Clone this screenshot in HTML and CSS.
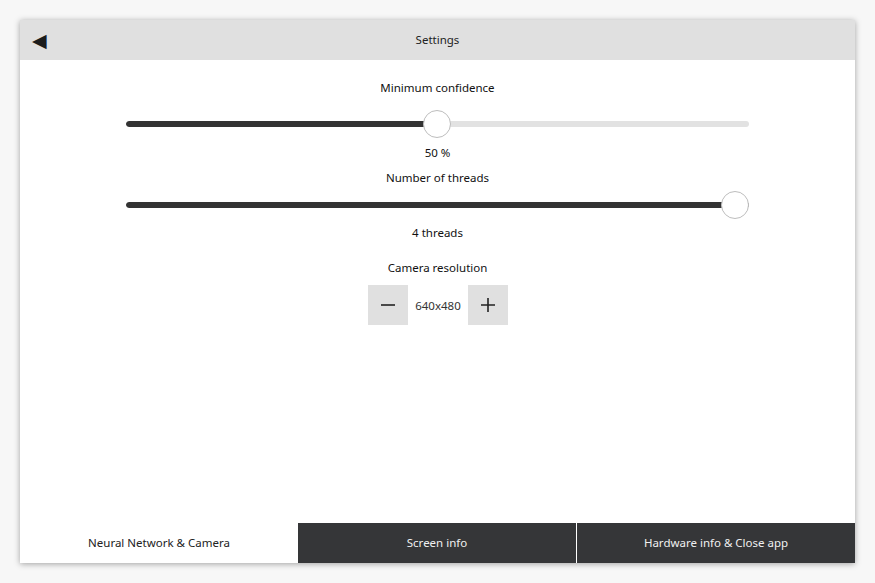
FILE: index.html
```html
<!DOCTYPE html>
<html>
<head>
<meta charset="utf-8">
<link rel="stylesheet" href="styles.css">
</head>
<body>
<div class="window">
  <div class="header">
    <span class="back">&#9664;</span>
    <span class="title">Settings</span>
  </div>
  <div class="content">
    <div class="label l1">Minimum confidence</div>
    <div class="slider s1">
      <div class="track"><div class="fill" style="width:50%"></div></div>
      <div class="knobarea"><div class="knob" style="left:50%"></div></div>
    </div>
    <div class="value v1">50 %</div>
    <div class="label l2">Number of threads</div>
    <div class="slider s2">
      <div class="track"><div class="fill" style="width:100%"></div></div>
      <div class="knobarea"><div class="knob" style="left:100%"></div></div>
    </div>
    <div class="value v2">4 threads</div>
    <div class="label l3">Camera resolution</div>
    <div class="spin">
      <div class="btn">
        <svg width="16" height="16" viewBox="0 0 16 16"><path d="M1 8h14" stroke="#222" stroke-width="1.6"/></svg>
      </div>
      <div class="spinval">640x480</div>
      <div class="btn">
        <svg width="16" height="16" viewBox="0 0 16 16"><path d="M1 8h14M8 1v14" stroke="#222" stroke-width="1.6"/></svg>
      </div>
    </div>
  </div>
  <div class="tabs">
    <div class="tab active">Neural Network &amp; Camera</div>
    <div class="tab">Screen info</div>
    <div class="tab">Hardware info &amp; Close app</div>
  </div>
</div>
</body>
</html>
```
FILE: styles.css
```css
html, body {
  margin: 0;
  padding: 0;
}
body {
  background: #f7f7f7;
  font-family: "Noto Sans", "Open Sans", sans-serif;
  font-size: 11.5px;
  color: #111;
  padding: 20px;
  box-sizing: border-box;
  width: 875px;
  height: 583px;
}
.window {
  width: 835px;
  height: 543px;
  background: #ffffff;
  box-shadow: 0 1px 6px rgba(0,0,0,0.35);
  display: flex;
  flex-direction: column;
}
.header {
  height: 40px;
  background: #e0e0e0;
  display: flex;
  align-items: center;
  position: relative;
}
.back {
  position: absolute;
  left: 12px;
  top: 9px;
  font-size: 19px;
  color: #1c1c1c;
  line-height: 22px;
}
.title {
  flex: 1;
  text-align: center;
  color: #222;
  padding-bottom: 2px;
}
.content {
  flex: 1;
  display: flex;
  flex-direction: column;
  align-items: center;
}
.label, .value {
  line-height: 16px;
  text-align: center;
}
.l1 { margin-top: 20px; }
.slider {
  position: relative;
  width: 623px;
  height: 30px;
  margin-left: -1px;
}
.s1 { margin-top: 13px; }
.s2 { margin-top: 4px; }
.track {
  position: absolute;
  left: 0;
  right: 0;
  top: 12px;
  height: 6px;
  border-radius: 3px;
  background: #e2e2e2;
  overflow: hidden;
}
.fill {
  height: 100%;
  background: #333333;
  border-radius: 3px;
}
.knobarea {
  position: absolute;
  left: 14px;
  right: 14px;
  top: 0;
  bottom: 0;
}
.knob {
  position: absolute;
  top: 1px;
  width: 26px;
  height: 26px;
  margin-left: -14px;
  border-radius: 50%;
  background: #fff;
  border: 1px solid #bdbdbd;
}
.v1 { margin-top: 6px; }
.l2 { margin-top: 9px; }
.v2 { margin-top: 5px; }
.l3 { margin-top: 19px; }
.spin {
  margin-top: 9px;
  display: flex;
  height: 40px;
  background: #e0e0e0;
  margin-left: 1px;
}
.btn {
  width: 40px;
  display: flex;
  align-items: center;
  justify-content: center;
}
.spinval {
  width: 60px;
  background: #fff;
  display: flex;
  align-items: center;
  justify-content: center;
  color: #333;
}
.tabs {
  height: 40px;
  display: flex;
}
.tab {
  flex: 1;
  display: flex;
  align-items: center;
  justify-content: center;
  background: #353638;
  color: #f0f0f0;
  padding-bottom: 2px;
}
.tab + .tab { border-left: 1px solid #ffffff; }
.tab.active {
  background: #fff;
  color: #222;
  border-left: none;
}
.tab.active + .tab { border-left: none; }
```
